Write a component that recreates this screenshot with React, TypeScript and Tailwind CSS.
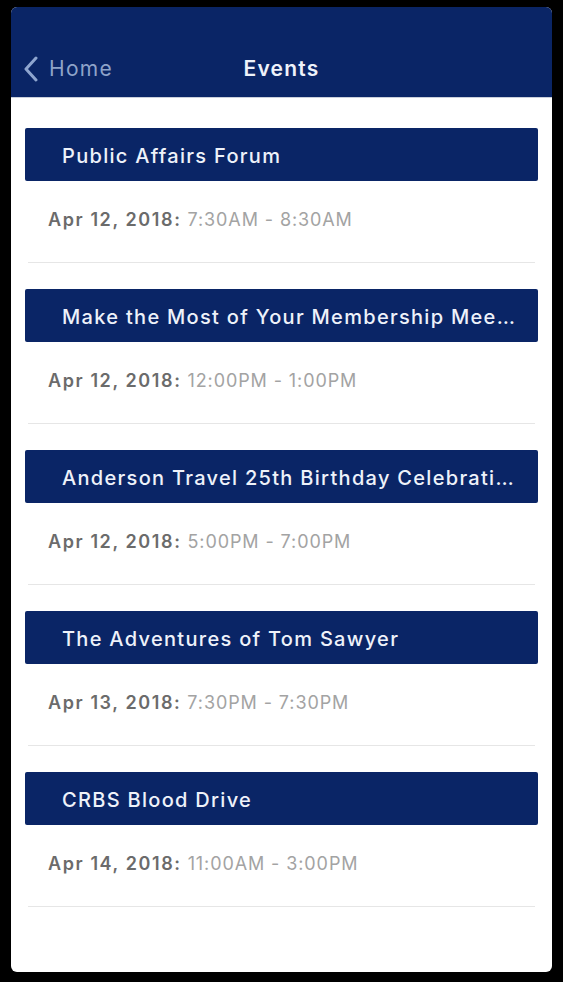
import React from "react";

const events = [
  { title: "Public Affairs Forum", date: "Apr 12, 2018:", time: "7:30AM - 8:30AM" },
  { title: "Make the Most of Your Membership Meeting", date: "Apr 12, 2018:", time: "12:00PM - 1:00PM" },
  { title: "Anderson Travel 25th Birthday Celebration", date: "Apr 12, 2018:", time: "5:00PM - 7:00PM" },
  { title: "The Adventures of Tom Sawyer", date: "Apr 13, 2018:", time: "7:30PM - 7:30PM" },
  { title: "CRBS Blood Drive", date: "Apr 14, 2018:", time: "11:00AM - 3:00PM" },
];

export default function App() {
  return (
    <div className="w-[563px] h-[1000px] bg-white" style={{ fontFamily: "Inter, 'Noto Sans', sans-serif" }}>
      <div className="h-[982px] bg-black pl-[11px] pr-[11px] pt-[7px] pb-[10px]">
        <div className="h-full bg-white rounded-[6px] overflow-hidden flex flex-col">
          <div className="bg-[#0a2566] pt-[40px] pb-[6px] border-b border-[#c9cfdb]">
            <div className="relative h-[44px] flex items-center justify-center">
              <div className="absolute left-[12px] top-0 h-full flex items-center gap-[10px]">
                <svg width="16" height="26" viewBox="0 0 16 26" fill="none">
                  <path d="M13 2 L3 13 L13 24" stroke="#8ea5cf" strokeWidth="3" strokeLinecap="round" strokeLinejoin="round" />
                </svg>
                <span className="text-[21px] text-[#8ea3c9] tracking-[1.3px]">Home</span>
              </div>
              <span className="text-[21px] font-semibold text-[#eef2fa] tracking-[1.2px]">Events</span>
            </div>
          </div>
          <div className="px-[14px] pt-[30px]">
            {events.map((e, i) => (
              <div key={i} className="mb-[26px]">
                <div className="h-[53px] bg-[#0a2566] rounded-[2px] flex items-center pl-[37px] pr-[18px]">
                  <span className="truncate text-[20px] font-medium text-[#eef2fa] tracking-[1.3px] pt-[2px]">{e.title}</span>
                </div>
                <div className="pl-[23px] pt-[28px] pb-[31px] text-[18px] leading-[22px]">
                  <span className="font-semibold text-[#6b6b6b] tracking-[1.6px]">{e.date}</span>
                  <span className="text-[#a3a3a3] tracking-[0.9px]"> {e.time}</span>
                </div>
                <div className="mx-[3px] h-[1px] bg-[#e6e6e6]" />
              </div>
            ))}
          </div>
        </div>
      </div>
    </div>
  );
}
